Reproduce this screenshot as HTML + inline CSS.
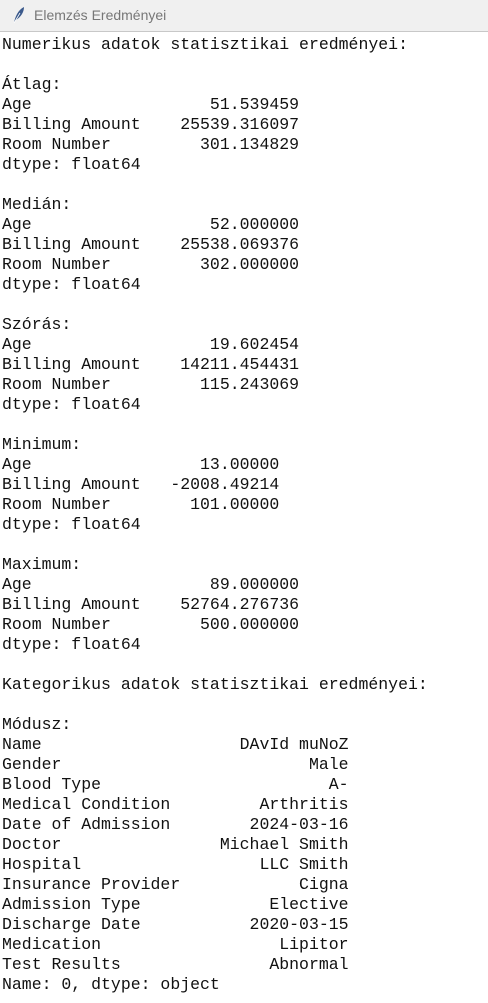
<!DOCTYPE html>
<html><head><meta charset="utf-8"><style>
html,body{margin:0;padding:0;width:488px;height:1003px;overflow:hidden;background:#fff;}
.t{height:31px;background:#f0f0f0;border-bottom:1px solid #c8c8c8;position:relative;font-family:"Liberation Sans",sans-serif;font-size:14px;color:#777;}
.t span{position:absolute;left:34px;top:7px;}
.t svg{position:absolute;left:12px;top:6px;}
pre{margin:0;position:absolute;left:2px;top:35px;font-family:"Liberation Mono",monospace;font-size:16.5px;line-height:20px;color:#111;}
</style></head><body>
<div class="t"><svg width="14" height="18" viewBox="0 0 14 18"><path d="M2 17 C3 11 6 4 12 1 C12 6 9 11 4 14 Z" fill="#3b5a8c"/><path d="M2 17 L8 7" stroke="#fff" stroke-width="0.8"/></svg><span>Elemzés Eredményei</span></div>
<pre>Numerikus adatok statisztikai eredményei:

Átlag:
Age                  51.539459
Billing Amount    25539.316097
Room Number         301.134829
dtype: float64

Medián:
Age                  52.000000
Billing Amount    25538.069376
Room Number         302.000000
dtype: float64

Szórás:
Age                  19.602454
Billing Amount    14211.454431
Room Number         115.243069
dtype: float64

Minimum:
Age                 13.00000
Billing Amount   -2008.49214
Room Number        101.00000
dtype: float64

Maximum:
Age                  89.000000
Billing Amount    52764.276736
Room Number         500.000000
dtype: float64

Kategorikus adatok statisztikai eredményei:

Módusz:
Name                    DAvId muNoZ
Gender                         Male
Blood Type                       A-
Medical Condition         Arthritis
Date of Admission        2024-03-16
Doctor                Michael Smith
Hospital                  LLC Smith
Insurance Provider            Cigna
Admission Type             Elective
Discharge Date           2020-03-15
Medication                  Lipitor
Test Results               Abnormal
Name: 0, dtype: object</pre>
</body></html>
